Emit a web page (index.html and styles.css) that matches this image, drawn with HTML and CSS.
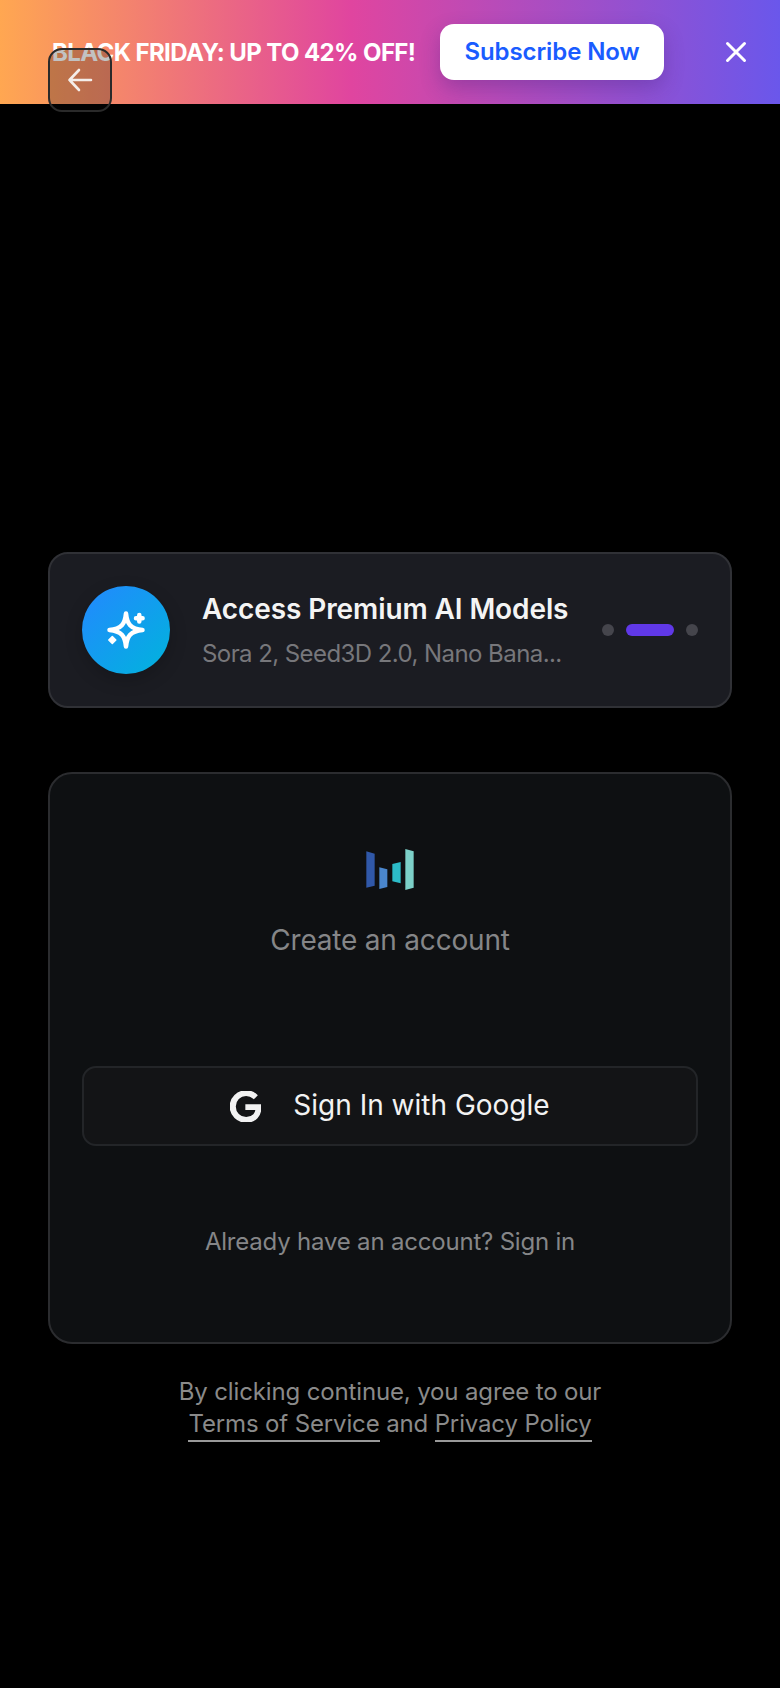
FILE: index.html
```html
<!DOCTYPE html>
<html>
<head>
<title>Create an account</title>
<meta charset="utf-8" />
<link rel="stylesheet" href="styles.css">
</head>
<body>
  <div class="promo">
    <span class="promo-text">BLACK FRIDAY: UP TO 42% OFF!</span>
    <a class="promo-btn">Subscribe Now</a>
    <svg class="promo-close" width="24" height="24" viewBox="0 0 24 24"><path d="M3.500 3.500L20.500 20.500M20.500 3.500L3.500 20.500" /></svg>
  </div>

  <a class="back">
    <svg width="28" height="28" viewBox="0 0 28 28"><path d="M25 14H3.500M13 4L3.500 14L13 24" /></svg>
  </a>

  <div class="main">
    <div class="feature">
      <div class="feature-icon">
        <svg width="48" height="48" viewBox="0 0 48 48">
          <path class="star" d="M24 7.500C25 18 28.500 22.800 40.500 24C28.500 25.200 25 30 24 40.500C23 30 19.500 25.200 7.500 24C19.500 22.800 23 18 24 7.500Z" />
          <path class="spark" d="M37.300 9V15.600M34 12.300H40.600" />
          <path class="spark small" d="M10.300 30.500L13.800 34L10.300 37.500L6.800 34Z" />
        </svg>
      </div>
      <div class="feature-text">
        <div class="feature-title">Access Premium AI Models</div>
        <div class="feature-sub">Sora 2, Seed3D 2.0, Nano Bana...</div>
      </div>
      <div class="dots">
        <span class="dot"></span>
        <span class="dot active"></span>
        <span class="dot"></span>
      </div>
    </div>

    <div class="panel">
      <svg class="logo" width="48" height="41" viewBox="349 58 142 123">
        <polygon fill="#3058a8" points="349,65 374,72 374,168 349,174" />
        <polygon fill="#4a86cc" points="388,113 412,119 412,172 388,178" />
        <polygon fill="#2cbcc8" points="427,103 452,97 452,161 427,155" />
        <polygon fill="#7cd0c8" points="466,58 491,65 491,174 466,181" />
      </svg>
      <div class="panel-title">Create an account</div>
      <a class="google">
        <svg width="31" height="31" viewBox="0 0 24 24"><path d="M12.480 10.920v3.280h7.840c-.240 1.840-.853 3.187-1.787 4.133-1.147 1.147-2.933 2.400-6.053 2.400-4.827 0-8.600-3.893-8.600-8.720s3.773-8.720 8.600-8.720c2.600 0 4.507 1.027 5.907 2.347l2.307-2.307C18.747 1.440 16.133 0 12.480 0 5.867 0 .307 5.387.307 12s5.560 12 12.173 12c3.573 0 6.267-1.173 8.373-3.360 2.160-2.160 2.840-5.213 2.840-7.667 0-.760-.053-1.467-.173-2.053H12.480z" /></svg>
        <span>Sign In with Google</span>
      </a>
      <div class="panel-foot">Already have an account? Sign in</div>
    </div>

    <div class="legal">
      By clicking continue, you agree to our<br />
      <a>Terms of Service</a> and <a>Privacy Policy</a>
    </div>
  </div>
</body>
</html>
```

FILE: styles.css
```css
*{
  margin:0;
  padding:0;
  box-sizing:border-box;
}
body{
  position:relative;
  height:1688px;
  background:#000;
  font-family:Inter,"Liberation Sans",sans-serif;
  color:#fff;
  overflow:hidden;
}

.promo{
  display:flex;
  align-items:center;
  height:104px;
  padding:0 32px 0 52px;
  background:linear-gradient(90deg,#ffa751 0%,#e0459f 45%,#6a57eb 100%);
}
.promo-text{
  width:388px;
  font-size:24px;
  font-weight:700;
  letter-spacing:-0.6px;
  white-space:nowrap;
}
.promo-btn{
  display:block;
  width:224px;
  height:56px;
  line-height:56px;
  text-align:center;
  background:#fff;
  color:#1a5cff;
  border-radius:14px;
  font-size:24px;
  font-weight:600;
  letter-spacing:-0.1px;
  box-shadow:0 8px 20px rgba(60,30,120,.3);
}
.promo-close{
  margin-left:auto;
}
.promo-close path{
  fill:none;
  stroke:#fff;
  stroke-width:3;
  stroke-linecap:round;
}

.back{
  position:absolute;
  top:48px;
  left:48px;
  display:flex;
  align-items:center;
  justify-content:center;
  width:64px;
  height:64px;
  border:2px solid #2a2a2a;
  border-radius:14px;
  background:rgba(10,10,10,.25);
}
.back path{
  fill:none;
  stroke:#f4eeea;
  stroke-width:2.600;
  stroke-linecap:round;
  stroke-linejoin:round;
}

.main{
  padding:448px 48px 0;
}

.feature{
  display:flex;
  align-items:center;
  height:156px;
  padding:0 32px;
  background:#1b1c22;
  border:2px solid #303136;
  border-radius:20px;
}
.feature-icon{
  display:flex;
  align-items:center;
  justify-content:center;
  flex:none;
  width:88px;
  height:88px;
  border-radius:50%;
  background:linear-gradient(135deg,#2388ff 0%,#00b4dc 100%);
  box-shadow:0 6px 18px rgba(0,0,0,.2);
}
.star{
  fill:none;
  stroke:#fff;
  stroke-width:4.500;
  stroke-linejoin:round;
}
.spark{
  fill:none;
  stroke:#fff;
  stroke-width:4.500;
  stroke-linecap:round;
}
.spark.small{
  fill:#fff;
  stroke-width:1.500;
  stroke-linejoin:round;
}
.feature-text{
  flex:1;
  margin-left:32px;
}
.feature-title{
  font-size:28px;
  font-weight:600;
  line-height:34px;
  letter-spacing:-0.1px;
  color:#f4f4f4;
}
.feature-sub{
  margin-top:13px;
  font-size:24px;
  line-height:30px;
  letter-spacing:-0.57px;
  color:#77777b;
}
.dots{
  display:flex;
  align-items:center;
  gap:12px;
}
.dot{
  display:block;
  width:12px;
  height:12px;
  border-radius:6px;
  background:#45454c;
}
.dot.active{
  width:48px;
  background:#6038e8;
}

.panel{
  display:flex;
  flex-direction:column;
  align-items:center;
  height:572px;
  margin-top:64px;
  padding:75px 32px 0;
  background:#0e1012;
  border:2px solid #2b2c2f;
  border-radius:24px;
}
.logo{
  display:block;
}
.panel-title{
  margin-top:32px;
  font-size:28px;
  line-height:36px;
  letter-spacing:-0.2px;
  color:#858688;
}
.google{
  display:flex;
  align-items:center;
  justify-content:center;
  gap:32px;
  width:100%;
  height:80px;
  margin-top:108px;
  background:#131416;
  border:2px solid #232528;
  border-radius:14px;
  font-size:28px;
  color:#f2f2f2;
}
.google span{
  padding-bottom:2px;
}
.google path{
  fill:#f2f2f2;
  stroke:#f2f2f2;
  stroke-width:1.200;
}
.panel-foot{
  margin-top:79px;
  font-size:24px;
  line-height:34px;
  letter-spacing:-0.2px;
  color:#858688;
}

.legal{
  margin-top:32px;
  text-align:center;
  font-size:24px;
  line-height:32px;
  letter-spacing:-0.14px;
  color:#8a8a8a;
}
.legal a{
  border-bottom:2px solid #999;
  padding-bottom:2px;
}
```
